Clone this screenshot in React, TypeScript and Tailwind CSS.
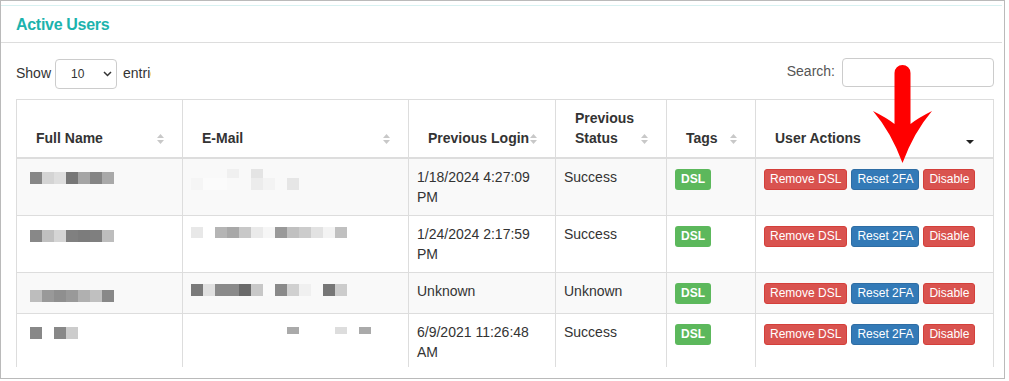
import React from 'react';

type Px = [number, number, number, number, string];

const users: {
  name: Px[];
  email: Px[];
  login: string[];
  status: string;
}[] = [
  {
    name: [
      [5, 5, 12, 12, '#878787'], [17, 5, 12, 12, '#d4d4d4'], [29, 5, 12, 12, '#dedede'], [41, 5, 12, 12, '#777777'],
      [53, 5, 12, 12, '#a5a5a5'], [65, 5, 12, 12, '#858585'], [77, 5, 12, 12, '#a9a9a9'],
    ],
    email: [
      [36, 2, 12, 9, '#f0f0f0'], [60, 2, 12, 9, '#e4e4e4'],
      [0, 11, 12, 12, '#f5f5f5'], [12, 11, 24, 12, '#fbfbfb'], [60, 11, 12, 12, '#ececec'], [72, 11, 12, 12, '#f3f3f3'],
      [96, 11, 12, 12, '#e6e6e6'],
    ],
    login: ['1/18/2024 4:27:09', 'PM'],
    status: 'Success',
  },
  {
    name: [
      [5, 6, 12, 12, '#888888'], [17, 6, 12, 12, '#c0c0c0'], [29, 6, 12, 12, '#d5d5d5'], [41, 6, 12, 12, '#808080'],
      [53, 6, 12, 12, '#7c7c7c'], [65, 6, 12, 12, '#7f7f7f'], [77, 6, 12, 12, '#bdbdbd'],
    ],
    email: [
      [0, 3, 12, 11, '#e8e8e8'], [24, 3, 12, 11, '#b5b5b5'], [36, 3, 12, 11, '#a8a8a8'], [48, 3, 12, 11, '#c8c8c8'],
      [60, 3, 12, 11, '#eaeaea'], [72, 3, 12, 11, '#f6f6f6'], [84, 3, 12, 11, '#999999'], [96, 3, 12, 11, '#c0c0c0'],
      [108, 3, 12, 11, '#cccccc'], [120, 3, 12, 11, '#e2e2e2'], [132, 3, 12, 11, '#f3f3f3'], [144, 3, 12, 11, '#c0c0c0'],
    ],
    login: ['1/24/2024 2:17:59', 'PM'],
    status: 'Success',
  },
  {
    name: [
      [5, 9, 12, 12, '#bdbdbd'], [17, 9, 12, 12, '#999999'], [29, 9, 12, 12, '#8f8f8f'], [41, 9, 12, 12, '#999999'],
      [53, 9, 12, 12, '#b0b0b0'], [65, 9, 12, 12, '#c0c0c0'], [77, 9, 12, 12, '#888888'],
    ],
    email: [
      [0, 3, 12, 12, '#7a7a7a'], [12, 3, 12, 12, '#e0e0e0'], [24, 3, 12, 12, '#8a8a8a'], [36, 3, 12, 12, '#8a8a8a'],
      [48, 3, 12, 12, '#6a6a6a'], [60, 3, 12, 12, '#c8c8c8'], [72, 3, 12, 12, '#fafafa'], [84, 3, 12, 12, '#8a8a8a'],
      [96, 3, 12, 12, '#d0d0d0'], [108, 3, 12, 12, '#f0f0f0'], [132, 3, 12, 12, '#777777'], [144, 3, 12, 12, '#cccccc'],
    ],
    login: ['Unknown'],
    status: 'Unknown',
  },
  {
    name: [
      [5, 5, 12, 12, '#888888'], [29, 5, 12, 12, '#888888'], [41, 5, 12, 12, '#cccccc'],
    ],
    email: [
      [96, 5, 12, 7, '#aaaaaa'], [144, 5, 12, 7, '#dddddd'], [168, 5, 12, 7, '#aaaaaa'],
    ],
    login: ['6/9/2021 11:26:48', 'AM'],
    status: 'Success',
  },
];

function Pixels({ rects }: { rects: Px[] }) {
  return (
    <svg width="190" height="24" className="block">
      {rects.map(([x, y, w, h, c], i) => (
        <rect key={i} x={x} y={y} width={w} height={h} fill={c} />
      ))}
    </svg>
  );
}

function SortIcon() {
  return (
    <svg width="7" height="10" viewBox="0 0 7 10" className="absolute right-[18px] bottom-[13px]">
      <polygon points="0,4 3.5,0 7,4" fill="#c8c8c8" />
      <polygon points="0,6 3.5,10 7,6" fill="#c8c8c8" />
    </svg>
  );
}

const cols = 'grid grid-cols-[166px_226px_147px_111px_89px_238px]';
const th = 'relative flex items-end pl-[19px] pr-[18px] pt-[8px] pb-[9px] border-r border-b-2 border-[#dddddd] font-bold text-[14px] leading-[20px]';
const td = 'p-[8px] border-r border-b border-[#dddddd] text-[14px] leading-[20px]';

export default function App() {
  return (
    <div className="w-[1009px] h-[381px] bg-white relative overflow-hidden font-['Liberation_Sans',Arial,sans-serif] text-[#333333]">
      <div className="w-[1005px] h-[379px] border border-[#bababa] flex flex-col">
        <div className="mt-[4px] mr-[2px] border-t border-[#d8f1f1]">
          <div className="h-[37px] flex items-center pt-[2px] pl-[15px] border-b border-[#dddddd] text-[#1cb3ad] text-[16px] font-bold tracking-[-0.3px]">
            Active Users
          </div>
        </div>

        <div className="pl-[15px] pr-[10px] pt-[15px]">
          <div className="flex justify-between h-[31px]">
            <div className="w-[135px] overflow-hidden whitespace-nowrap flex items-center text-[14px]">
              <span>Show</span>
              <div className="ml-[4px] mt-[1px] shrink-0 w-[62px] h-[30px] border border-[#cccccc] rounded-[4px] flex items-center pl-[15px] pr-[4px] text-[12px]">
                <span>10</span>
                <svg width="9" height="6" viewBox="0 0 9 6" className="ml-auto">
                  <path d="M1 1 L4.5 4.5 L8 1" fill="none" stroke="#333" strokeWidth="1.5" />
                </svg>
              </div>
              <span className="ml-[6px]">entries</span>
            </div>
            <div className="flex items-start">
              <span className="text-[14px] text-[#555555] leading-[27px] mr-[7px]">Search:</span>
              <div className="w-[152px] h-[29px] border border-[#cccccc] rounded-[4px]" />
            </div>
          </div>

          <div className="mt-[10px] h-[268px] overflow-hidden">
            <div className="w-[978px] border-l border-t border-[#dddddd]">
              <div className={cols}>
                <div className={th}>Full Name<SortIcon /></div>
                <div className={th}>E-Mail<SortIcon /></div>
                <div className={th}>Previous Login<SortIcon /></div>
                <div className={th}>Previous Status<SortIcon /></div>
                <div className={th}>Tags<SortIcon /></div>
                <div className={th}>
                  User Actions
                  <svg width="8" height="4" viewBox="0 0 8 4" className="absolute right-[19px] bottom-[13px]">
                    <polygon points="0,0 8,0 4,4" fill="#222" />
                  </svg>
                </div>
              </div>

              {users.map((u, i) => (
                <div key={i} className={`${cols} ${i % 2 === 0 ? 'bg-[#f9f9f9]' : 'bg-white'}`}>
                  <div className={td}><Pixels rects={u.name} /></div>
                  <div className={td}><Pixels rects={u.email} /></div>
                  <div className={td}>
                    {u.login.map((l) => (
                      <div key={l}>{l}</div>
                    ))}
                  </div>
                  <div className={td}>{u.status}</div>
                  <div className={td}>
                    <div className="pt-[2px] flex">
                      <span className="h-[21px] px-[6px] rounded-[3px] bg-[#5cb85c] text-white text-[12px] font-bold leading-[21px]">DSL</span>
                    </div>
                  </div>
                  <div className={td}>
                    <div className="pt-[2px] flex gap-[4px] text-[12px] text-white">
                      <button className="h-[21px] px-[5px] rounded-[3px] bg-[#d9534f] border border-[#d43f3a] leading-[19px]">Remove DSL</button>
                      <button className="h-[21px] px-[5px] rounded-[3px] bg-[#337ab7] border border-[#2e6da4] leading-[19px]">Reset 2FA</button>
                      <button className="h-[21px] px-[5px] rounded-[3px] bg-[#d9534f] border border-[#d43f3a] leading-[19px]">Disable</button>
                    </div>
                  </div>
                </div>
              ))}
            </div>
          </div>
        </div>
      </div>

      <svg width="1009" height="381" className="absolute left-0 top-0 pointer-events-none">
        <path
          d="M894.5 73 A8 8 0 0 1 910.5 73 L910.5 124 Q918 118 932 111 Q914 132 902.5 163 Q891 132 873 111 Q887 118 894.5 124 Z"
          fill="#ff0000"
        />
      </svg>
    </div>
  );
}
